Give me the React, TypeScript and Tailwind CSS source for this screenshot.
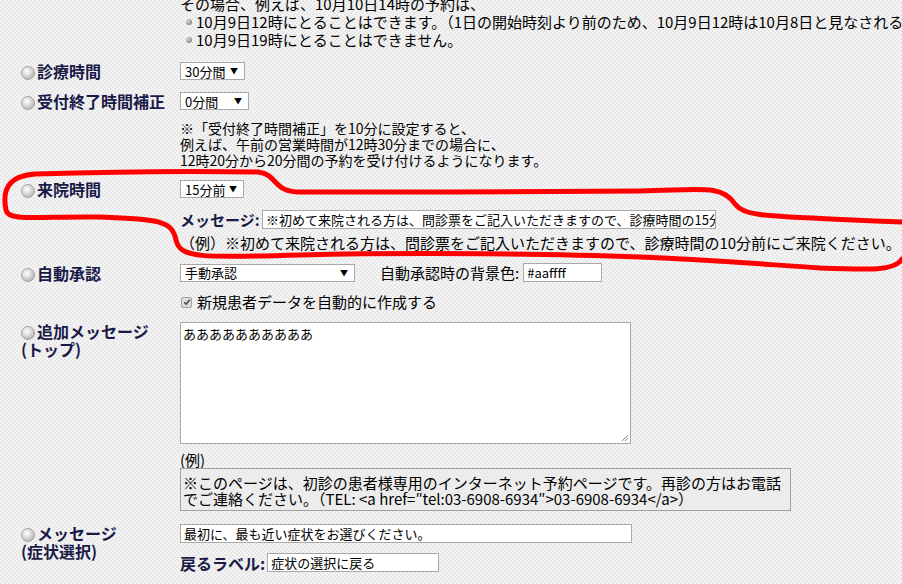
import type { ReactNode } from 'react'

function Radio() {
  return (
    <span className="mr-[2px] inline-block h-[14px] w-[14px] shrink-0 rounded-full border border-[#a4a4a4] bg-[radial-gradient(circle_at_40%_35%,#ffffff_0%,#e2e2e2_35%,#b8b8b8_75%,#8e8e8e_100%)] align-[-2px]" />
  )
}

function Label({ children }: { children: ReactNode }) {
  return (
    <div className="w-[180px] shrink-0 whitespace-nowrap pl-[21px] text-[16px] font-bold leading-[18px] text-[#1a1a48]">
      <Radio />
      {children}
    </div>
  )
}

function Select({ value, className }: { value: string; className: string }) {
  return (
    <div
      className={`flex h-[18px] shrink-0 items-center justify-between border border-[#a9a9a9] bg-white pl-[4px] pr-[6px] text-[13px] leading-none text-black ${className}`}
    >
      <span>{value}</span>
      <span className="text-[8px]">▼</span>
    </div>
  )
}

function Input({ value, className }: { value: string; className: string }) {
  return (
    <div
      className={`flex h-[19px] shrink-0 items-center overflow-hidden whitespace-nowrap border border-[#a9a9a9] bg-white pl-[3px] text-[13px] leading-none text-black ${className}`}
    >
      {value}
    </div>
  )
}

function Bullet() {
  return (
    <span className="ml-[6px] mr-[4px] inline-block h-[6px] w-[6px] shrink-0 rounded-full bg-[radial-gradient(circle_at_35%_35%,#d6d6d6,#6e6e6e)]" />
  )
}

export default function App() {
  return (
    <div className="relative h-[584px] w-[902px] overflow-hidden bg-[#efefef] bg-[image:repeating-conic-gradient(#e8e8e8_0_25%,#f4f4f4_0_50%)] bg-[length:4px_4px] font-['Noto_Sans_CJK_JP',sans-serif] text-black">
      <div className="flex flex-col">
        {/* 続き：受付開始の説明 */}
        <div className="-mt-[5px] whitespace-nowrap pl-[180px] text-[15px] leading-[18px]">
          <div>その場合、例えば、10月10日14時の予約は、</div>
          <div className="flex items-center">
            <Bullet />
            <span>10月9日12時にとることはできます。（1日の開始時刻より前のため、10月9日12時は10月8日と見なされるため）</span>
          </div>
          <div className="flex items-center">
            <Bullet />
            <span>10月9日19時にとることはできません。</span>
          </div>
        </div>

        <div className="mt-[13px] flex items-center">
          <Label>診療時間</Label>
          <Select value="30分間" className="w-[65px]" />
        </div>

        <div className="mt-[12px] flex items-center">
          <Label>受付終了時間補正</Label>
          <Select value="0分間" className="w-[69px]" />
        </div>

        <div className="mt-[10px] pl-[180px] text-[14px] leading-[16px]">
          <div>※「受付終了時間補正」を10分に設定すると、</div>
          <div>例えば、午前の営業時間が12時30分までの場合に、</div>
          <div>12時20分から20分間の予約を受け付けるようになります。</div>
        </div>

        <div className="mt-[12px] flex items-center">
          <Label>来院時間</Label>
          <Select value="15分前" className="w-[64px]" />
        </div>

        <div className="mt-[12px] flex items-center pl-[180px]">
          <span className="w-[82px] whitespace-nowrap text-[15px] font-bold leading-[18px] text-[#1a1a48]">メッセージ:</span>
          <Input
            value="※初めて来院される方は、問診票をご記入いただきますので、診療時間の15分前にご来院ください。"
            className="h-[18px] w-[454px]"
          />
        </div>

        <div className="mt-[5px] whitespace-nowrap pl-[180px] text-[15px] leading-[18px]">
          （例）※初めて来院される方は、問診票をご記入いただきますので、診療時間の10分前にご来院ください。
        </div>

        <div className="mt-[11px] flex items-center">
          <Label>自動承認</Label>
          <Select value="手動承認" className="w-[175px]" />
          <span className="ml-[25px] whitespace-nowrap text-[15px] leading-[18px]">自動承認時の背景色:</span>
          <Input value="#aaffff" className="ml-[4px] h-[18px] w-[79px]" />
        </div>

        <div className="mt-[11px] flex items-center pl-[181px] text-[15px] leading-[18px]">
          <span className="mr-[5px] flex h-[11px] w-[11px] items-center justify-center rounded-[2px] border border-[#a0a0a0] bg-[#dcdcdc]">
            <svg viewBox="0 0 10 10" className="h-[8px] w-[8px]">
              <path d="M1.5 5.2 L4 7.6 L8.6 2.2" fill="none" stroke="#4a4a4a" strokeWidth="1.8" />
            </svg>
          </span>
          新規患者データを自動的に作成する
        </div>

        <div className="mt-[11px] flex items-start">
          <Label>
            追加メッセージ
            <br />
            (トップ)
          </Label>
          <div className="relative h-[122px] w-[451px] border border-[#a9a9a9] bg-white pl-[2px] pt-[3px] text-[13px] leading-[16px]">
            ああああああああああ
            <svg viewBox="0 0 8 8" className="absolute bottom-[1px] right-[1px] h-[8px] w-[8px]">
              <path d="M7 1 L1 7 M7 4 L4 7" stroke="#8a8a8a" strokeWidth="1" />
            </svg>
          </div>
        </div>

        <div className="mt-[7px] pl-[180px] text-[15px] leading-[17px]">(例)</div>

        <div className="ml-[180px] w-[611px] whitespace-nowrap border border-[#a0a0a0] bg-[#ececec] pb-[3px] pl-[2px] pt-[6px] text-[15px] leading-[16px]">
          <div>※このページは、初診の患者様専用のインターネット予約ページです。再診の方はお電話</div>
          <div>でご連絡ください。（TEL: &lt;a href=″tel:03-6908-6934″&gt;03-6908-6934&lt;/a&gt;）</div>
        </div>

        <div className="mt-[13px] flex items-start">
          <Label>
            メッセージ
            <br />
            (症状選択)
          </Label>
          <div className="flex flex-col">
            <Input value="最初に、最も近い症状をお選びください。" className="w-[452px]" />
            <div className="mt-[10px] flex items-center">
              <span className="mr-[2px] whitespace-nowrap text-[16px] font-bold leading-[18px] text-[#1a1a48]">戻るラベル:</span>
              <Input value="症状の選択に戻る" className="h-[18px] w-[172px]" />
            </div>
          </div>
        </div>

        <div className="mt-[14px] flex items-start">
          <Label>&nbsp;</Label>
          <Input value="" className="w-[452px]" />
        </div>
      </div>

      {/* 手書きの赤い囲み */}
      <svg className="pointer-events-none absolute left-0 top-0" width="902" height="584" viewBox="0 0 902 584">
        <path
          d="M6 210 C2 190 8 176 35 174 C100 172 200 171 258 172 C278 174 272 192 300 192 C400 192 560 192 640 191 C700 190 722 184 735 204 C746 218 770 216 902 222 M902 259 C895 271 870 270 820 268 C760 264 700 259 640 257 C560 254 420 252 300 255 C200 258 180 258 176 240 C172 221 160 219 100 217 C40 216 8 222 6 210"
          fill="none"
          stroke="#ff0000"
          strokeWidth="5"
          strokeLinecap="round"
          strokeLinejoin="round"
        />
      </svg>
    </div>
  )
}
